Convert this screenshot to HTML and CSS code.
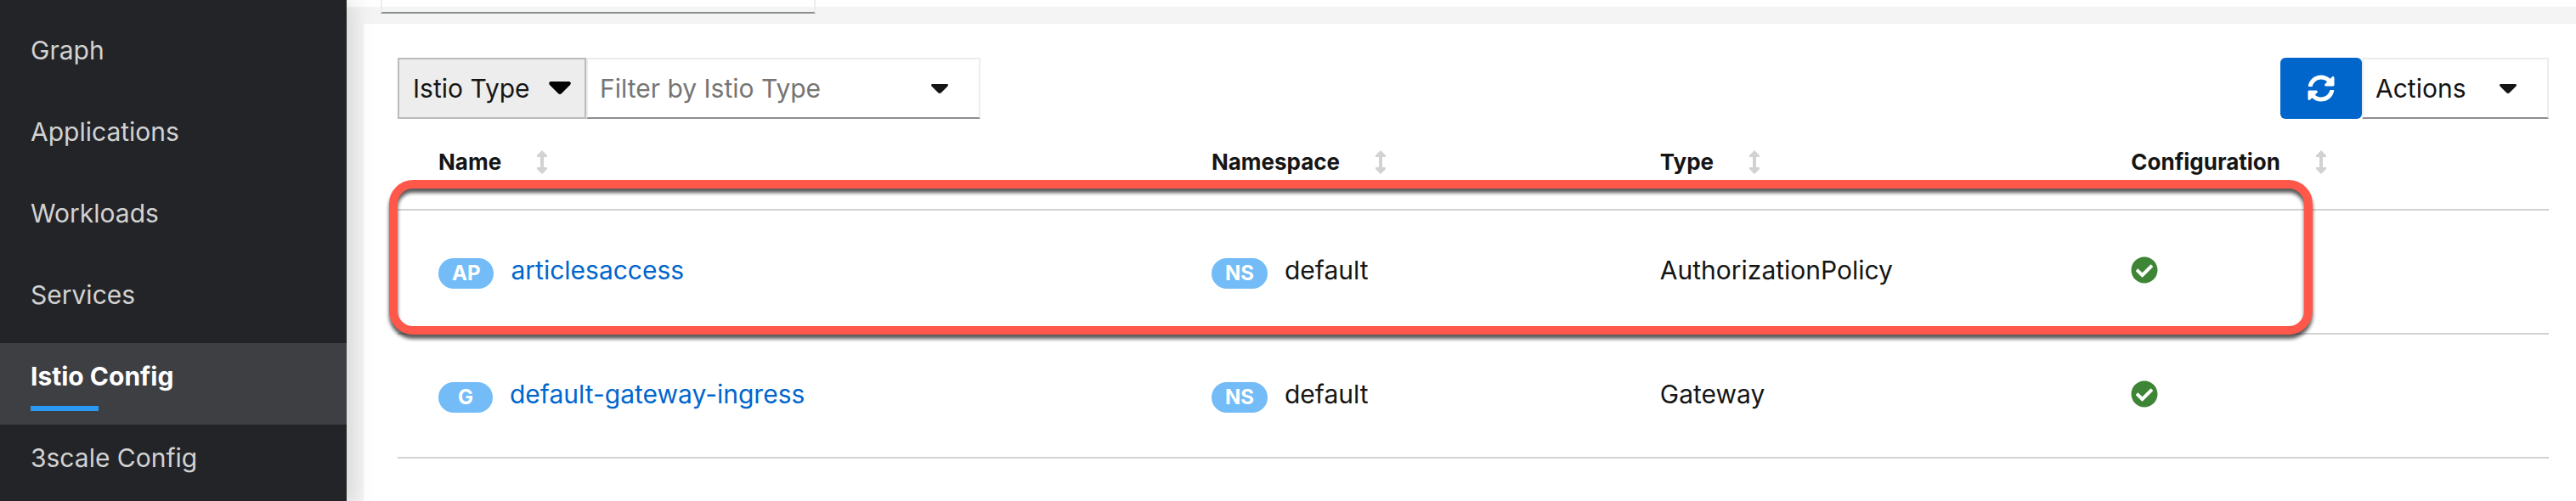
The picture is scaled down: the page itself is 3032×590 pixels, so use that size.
FILE: index.html
```html
<!DOCTYPE html>
<html lang="en">
<head>
<meta charset="utf-8">
<title>Istio Config</title>
<link rel="stylesheet" href="styles.css">
</head>
<body>
<div class="app">
  <nav class="sidebar" aria-label="Main">
    <a class="nav-item" href="#graph">Graph</a>
    <a class="nav-item" href="#applications">Applications</a>
    <a class="nav-item" href="#workloads">Workloads</a>
    <a class="nav-item" href="#services">Services</a>
    <a class="nav-item active" href="#istio" aria-current="page">Istio Config</a>
    <a class="nav-item" href="#3scale">3scale Config</a>
  </nav>
  <div class="page">
    <header class="masthead"><button class="namespace-select" type="button" aria-label="Namespace"></button></header>
    <main class="panel">
      <div class="toolbar">
        <button class="type-select" type="button">Istio Type
          <svg class="caret-big" viewBox="0 0 26 16" aria-hidden="true"><path d="M2 0h22q3 1 1 4L15 14q-2 2-4 0L1 4Q-1 1 2 0z"/></svg>
        </button>
        <div class="filter">
          <input class="filter-input" type="text" placeholder="Filter by Istio Type" aria-label="Filter by Istio Type">
          <svg class="caret" viewBox="0 0 20 11" aria-hidden="true"><path d="M1 0h18q2 1 0 3l-7 7q-2 2-4 0L1 3Q-1 1 1 0z"/></svg>
        </div>
        <button class="refresh" type="button" aria-label="Refresh">
          <svg class="refresh-icon" viewBox="0 0 512 512" aria-hidden="true"><path d="M370.72 133.28C339.458 104.008 298.888 87.962 255.848 88c-77.458.068-144.328 53.178-162.791 126.85-1.344 5.363-6.122 9.15-11.651 9.15H24.103c-7.498 0-13.194-6.807-11.807-14.176C33.933 94.924 134.813 8 256 8c66.448 0 126.791 26.136 171.315 68.685L463.03 40.97C478.149 25.851 504 36.559 504 57.941V192c0 13.255-10.745 24-24 24H345.941c-21.382 0-32.09-25.851-16.971-40.971l41.75-41.749zM32 296h134.059c21.382 0 32.09 25.851 16.971 40.971l-41.75 41.75c31.262 29.273 71.835 45.319 114.876 45.28 77.418-.07 144.315-53.144 162.787-126.849 1.344-5.363 6.122-9.15 11.651-9.15h57.304c7.498 0 13.194 6.807 11.807 14.176C478.067 417.076 377.187 504 256 504c-66.448 0-126.791-26.136-171.315-68.685L48.97 471.03C33.851 486.149 8 475.441 8 454.059V320c0-13.255 10.745-24 24-24z"/></svg>
        </button>
        <button class="actions" type="button">Actions
          <svg class="caret" viewBox="0 0 20 11" aria-hidden="true"><path d="M1 0h18q2 1 0 3l-7 7q-2 2-4 0L1 3Q-1 1 1 0z"/></svg>
        </button>
      </div>
      <div class="table-wrap">
        <table class="configs">
          <colgroup><col class="col-name"><col class="col-namespace"><col class="col-type"><col></colgroup>
          <thead>
            <tr>
              <th scope="col"><button class="sort" type="button">Name <svg viewBox="0 0 12 28" aria-hidden="true"><path d="M6 0l6 6v2H8v12h4v2l-6 6-6-6v-2h4V8H0V6z"/></svg></button></th>
              <th scope="col"><button class="sort" type="button">Namespace <svg viewBox="0 0 12 28" aria-hidden="true"><path d="M6 0l6 6v2H8v12h4v2l-6 6-6-6v-2h4V8H0V6z"/></svg></button></th>
              <th scope="col"><button class="sort" type="button">Type <svg viewBox="0 0 12 28" aria-hidden="true"><path d="M6 0l6 6v2H8v12h4v2l-6 6-6-6v-2h4V8H0V6z"/></svg></button></th>
              <th scope="col"><button class="sort" type="button">Configuration <svg viewBox="0 0 12 28" aria-hidden="true"><path d="M6 0l6 6v2H8v12h4v2l-6 6-6-6v-2h4V8H0V6z"/></svg></button></th>
            </tr>
          </thead>
          <tbody>
            <tr>
              <td><div class="cell"><span class="badge">AP</span><a class="link" href="#articlesaccess">articlesaccess</a></div></td>
              <td><div class="cell"><span class="badge">NS</span>default</div></td>
              <td>AuthorizationPolicy</td>
              <td><svg class="status" viewBox="0 0 512 512" role="img" aria-label="Valid"><path d="M504 256c0 136.967-111.033 248-248 248S8 392.967 8 256 119.033 8 256 8s248 111.033 248 248zM227.314 387.314l184-184c6.248-6.248 6.248-16.379 0-22.627l-22.627-22.627c-6.248-6.249-16.379-6.249-22.628 0L216 308.118l-70.059-70.059c-6.248-6.248-16.379-6.248-22.628 0l-22.627 22.627c-6.248 6.248-6.248 16.379 0 22.627l104 104c6.249 6.249 16.379 6.249 22.628.001z"/></svg></td>
            </tr>
            <tr>
              <td><div class="cell"><span class="badge">G</span><a class="link" href="#default-gateway-ingress">default-gateway-ingress</a></div></td>
              <td><div class="cell"><span class="badge">NS</span>default</div></td>
              <td>Gateway</td>
              <td><svg class="status" viewBox="0 0 512 512" role="img" aria-label="Valid"><path d="M504 256c0 136.967-111.033 248-248 248S8 392.967 8 256 119.033 8 256 8s248 111.033 248 248zM227.314 387.314l184-184c6.248-6.248 6.248-16.379 0-22.627l-22.627-22.627c-6.248-6.249-16.379-6.249-22.628 0L216 308.118l-70.059-70.059c-6.248-6.248-16.379-6.248-22.628 0l-22.627 22.627c-6.248 6.248-6.248 16.379 0 22.627l104 104c6.249 6.249 16.379 6.249 22.628.001z"/></svg></td>
            </tr>
          </tbody>
        </table>
        <div class="highlight"></div>
      </div>
    </main>
  </div>
</div>
</body>
</html>
```
FILE: styles.css
```css
* { box-sizing: border-box; }
body {
  margin: 0;
  font: 30px/48px Inter, "Open Sans", sans-serif;
  color: #151515;
  background: #fff;
}
button, input { font: inherit; color: inherit; margin: 0; }
svg { display: block; flex: none; fill: currentColor; }

.app { display: flex; min-height: 100vh; }

.sidebar {
  position: relative;
  z-index: 1;
  flex: none;
  width: 408px;
  padding-top: 20px;
  background: #232428;
  box-shadow: 8px 0 24px rgba(3, 3, 3, 0.12);
}
.nav-item {
  display: block;
  height: 96px;
  padding: 15px 36px;
  color: #d2d2d2;
  text-decoration: none;
}
.nav-item.active { background: #3e3f43; color: #fff; font-weight: 700; }
.nav-item.active::after {
  content: "";
  display: block;
  width: 80px;
  height: 6px;
  margin-top: 11px;
  background: #2b9af3;
}

.page { flex: 1; min-width: 0; display: flex; flex-direction: column; background: #f4f4f4; }
.masthead { height: 28px; padding-left: 40px; background: linear-gradient(#fff 8px, #f4f4f4 8px); }
.namespace-select {
  display: block;
  width: 512px;
  height: 16px;
  border: 2px solid #ededed;
  border-top: 0;
  border-bottom-color: #8a8d90;
  background: transparent;
}
.panel { flex: 1; margin-left: 20px; padding: 40px 32px 0 40px; background: #fff; }

.toolbar { display: flex; height: 72px; }
.type-select {
  display: flex;
  align-items: center;
  justify-content: space-between;
  width: 222px;
  padding: 0 16px;
  border: 2px solid #bbb;
  background: #ededed;
  color: #151515;
}
.caret-big { width: 26px; height: 16px; fill: #000; }
.caret { width: 20px; height: 11px; }
.filter, .actions {
  display: flex;
  align-items: center;
  justify-content: space-between;
  border: 2px solid #ededed;
  border-bottom-color: #8a8d90;
  background: #fff;
}
.filter { width: 464px; padding: 0 36px 0 14px; }
.filter-input { flex: 1; min-width: 0; padding: 0; border: 0; outline: 0; background: none; }
.filter-input::placeholder { color: #757575; opacity: 1; }
.refresh {
  display: flex;
  align-items: center;
  justify-content: center;
  width: 96px;
  margin-left: auto;
  border: 0;
  border-radius: 6px;
  background: #06c;
  color: #fff;
}
.refresh-icon { width: 32px; height: 32px; }
.actions { width: 220px; padding: 0 36px 0 14px; }

.table-wrap { position: relative; }
.configs { width: 100%; table-layout: fixed; border-collapse: collapse; }
.col-name { width: 37.2%; }
.col-namespace { width: 20.85%; }
.col-type { width: 21.9%; }
.configs th, .configs td { padding: 0 16px 4px; border-bottom: 2px solid #d2d2d2; text-align: left; }
.configs th:first-child, .configs td:first-child { padding-left: 48px; }
.configs th { height: 107px; }
.configs td { height: 146px; }
.sort {
  display: flex;
  align-items: center;
  gap: 42px;
  padding: 0;
  border: 0;
  background: none;
  font-size: 26px;
  font-weight: 700;
}
.sort svg { width: 12px; height: 28px; color: #d2d2d2; }
.cell { display: flex; align-items: center; gap: 20px; }
.badge {
  min-width: 64px;
  height: 36px;
  margin-top: 8px;
  padding: 0 16px;
  border-radius: 18px;
  background: #73bcf7;
  color: #fff;
  font-size: 24px;
  font-weight: 700;
  line-height: 36px;
  text-align: center;
}
.link { color: #06c; text-decoration: none; }
.status { width: 32px; height: 32px; color: #3e8635; }
.highlight {
  position: absolute;
  top: 72px;
  left: -10px;
  width: 2264px;
  height: 182px;
  border: 10px solid #ff584a;
  border-radius: 28px;
  filter: drop-shadow(0 5px 2px rgba(0, 0, 0, 0.65));
  pointer-events: none;
}
```
